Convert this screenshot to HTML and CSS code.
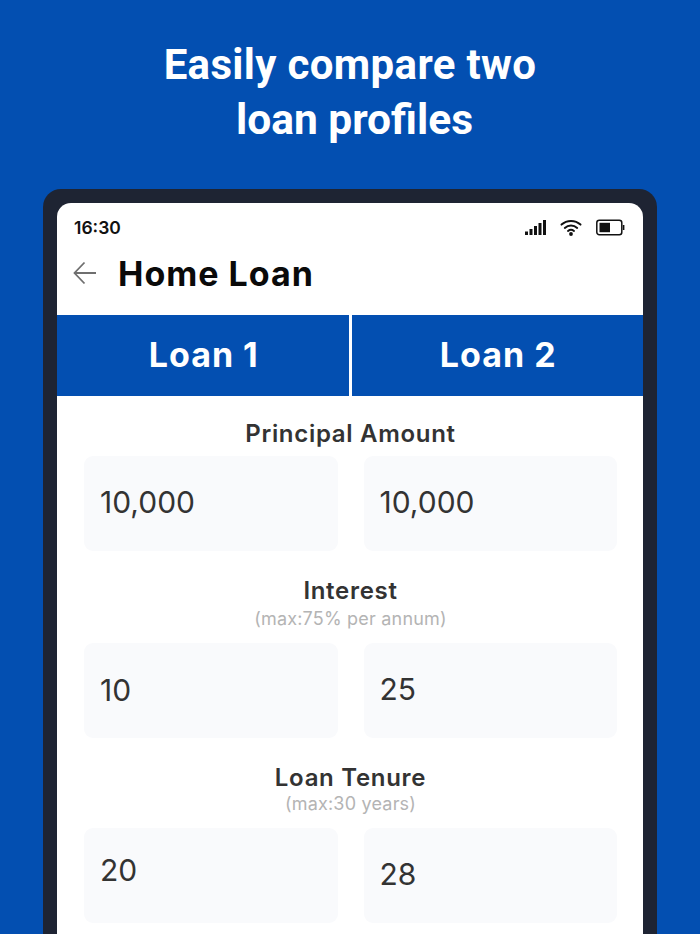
FILE: index.html
```html
<!DOCTYPE html>
<html lang="en">
<head>
<meta charset="utf-8">
<title>Home Loan</title>
<link rel="stylesheet" href="styles.css">
</head>
<body>
<main class="page">
  <h1 class="headline">Easily compare two<br><span class="headline-second">loan profiles</span></h1>
  <section class="device">
    <div class="screen">
      <div class="status">
        <span class="time">16:30</span>
        <div class="status-icons">
          <svg class="signal" width="22" height="17" viewBox="0 0 22 17"><g fill="#111"><rect x="0" y="12.500" width="3" height="3.500"/><rect x="4.500" y="10" width="3" height="6"/><rect x="9" y="7" width="3" height="9"/><rect x="13.500" y="4" width="3" height="12"/><rect x="18" y="1" width="3" height="15"/></g></svg>
          <svg class="wifi" width="22" height="17" viewBox="0 0 22 17"><g fill="none" stroke="#111" stroke-width="2" stroke-linecap="round"><path d="M1.500 5.600C6.800 .8 15.200 .8 20.500 5.600"/><path d="M4.800 8.900C8.300 5.700 13.700 5.700 17.200 8.900"/><path d="M8 11.900C9.700 10.500 12.300 10.500 14 11.900"/></g><circle cx="11" cy="15" r="1.900" fill="#111"/></svg>
          <svg class="battery" width="30" height="17" viewBox="0 0 30 17"><rect x="1.800" y="1.300" width="25" height="14.400" rx="2.500" fill="none" stroke="#111" stroke-width="1.500"/><rect x="4.500" y="3.800" width="10.500" height="9.400" fill="#111"/><rect x="27.800" y="6" width="1.600" height="5" fill="#111"/></svg>
        </div>
      </div>
      <header class="appbar">
        <svg class="back" width="24" height="24" viewBox="0 0 24 24"><path d="M23 12H2M11.500 1.500 1.500 12l10 10.500" fill="none" stroke="#6f6f6f" stroke-width="1.800"/></svg>
        <span class="title">Home Loan</span>
      </header>
      <div class="tabs">
        <div class="tab">Loan 1</div>
        <div class="tab">Loan 2</div>
      </div>
      <div class="form">
        <div class="group">
          <div class="label">Principal Amount</div>
          <div class="fields">
            <div class="field field-first">10,000</div>
            <div class="field field-first">10,000</div>
          </div>
        </div>
        <div class="group group-interest">
          <div class="label">Interest</div>
          <div class="hint">(max:75% per annum)</div>
          <div class="fields">
            <div class="field field-ten">10</div>
            <div class="field field-up">25</div>
          </div>
        </div>
        <div class="group group-tenure">
          <div class="label">Loan Tenure</div>
          <div class="hint">(max:30 years)</div>
          <div class="fields">
            <div class="field field-up2">20</div>
            <div class="field field-up">28</div>
          </div>
        </div>
      </div>
    </div>
  </section>
</main>
</body>
</html>
```
FILE: styles.css
```css
* { box-sizing: border-box; }
html, body { margin: 0; padding: 0; height: 934px; overflow: hidden; }
body { background: #034fb1; font-family: "Inter", "Liberation Sans", sans-serif; }
.page { display: flex; flex-direction: column; align-items: center; height: 934px; overflow: hidden; }
.headline {
  margin: 37px 0 0;
  font-family: "Roboto", sans-serif;
  font-weight: 700;
  font-size: 42px;
  line-height: 55px;
  letter-spacing: 0.35px;
  color: #fff;
  text-align: center;
}
.headline-second {
  display: inline-block;
  margin-left: 9px;
  font-size: 42.500px;
  letter-spacing: 0;
}
.device {
  margin-top: 42px;
  width: 614px;
  flex: 1;
  background: #1e2433;
  border-radius: 18px 18px 0 0;
  padding: 14px 14px 0;
}
.screen {
  background: #fff;
  border-radius: 14px 14px 0 0;
  height: 100%;
}
.status {
  height: 46px;
  display: flex;
  justify-content: space-between;
  align-items: center;
  padding: 2px 18px 0 17px;
}
.time { font-size: 17.500px; font-weight: 600; color: #111; }
.status-icons { display: flex; align-items: center; gap: 13px; }
.appbar {
  height: 66px;
  display: flex;
  align-items: center;
  padding: 0 0 18px 16px;
  gap: 21px;
}
.back { width: 24px; height: 24px; }
.title { font-size: 34px; font-weight: 700; color: #0a0a0a; letter-spacing: 1px; }
.tabs { display: flex; height: 81px; background: #fff; gap: 3px; }
.tab {
  flex: 1;
  display: flex;
  align-items: center;
  justify-content: center;
  background: #034fb1;
  color: #fff;
  font-size: 34px;
  font-weight: 700;
  letter-spacing: 1px;
  padding: 0 0 2px 2px;
}
.form { padding: 24px 26px 0 27px; }
.group { text-align: center; }
.group-interest { margin-top: 26px; }
.group-tenure { margin-top: 26px; }
.label { font-size: 24px; line-height: 27px; font-weight: 600; color: #333; letter-spacing: 0.700px; }
.hint { font-size: 18px; line-height: 22px; color: #b4b4b4; letter-spacing: 0.200px; margin-top: 2px; }
.group-interest .hint { margin-top: 4px; }
.fields { display: flex; gap: 26px; margin-top: 9px; }
.group-interest .fields { margin-top: 13px; }
.group-tenure .fields { margin-top: 13px; }
.field {
  flex: 1;
  height: 95px;
  background: #f9fafc;
  border-radius: 9px;
  display: flex;
  align-items: center;
  padding: 0 16px;
  font-size: 30px;
  color: #333;
  text-align: left;
}
.field-first { padding-bottom: 3px; }
.field-ten { padding-bottom: 2px; }
.field-up { padding-bottom: 4px; }
.field-up2 { padding-bottom: 12px; }
```
